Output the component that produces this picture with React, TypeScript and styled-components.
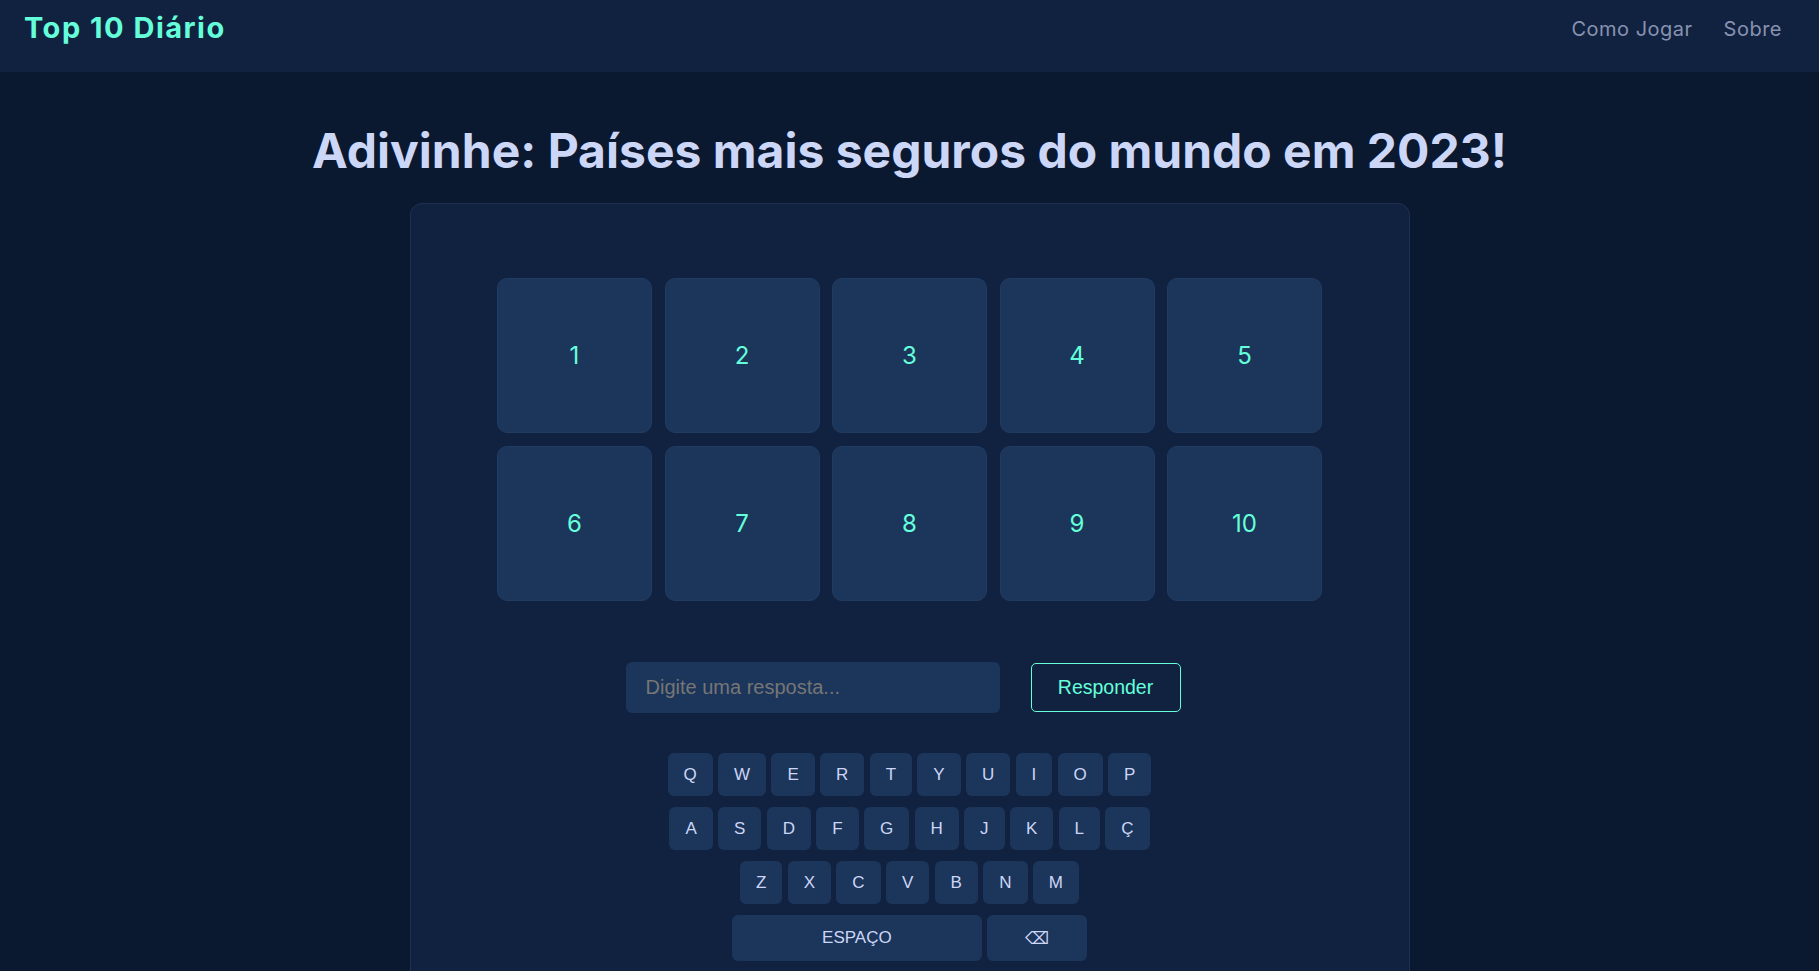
import styled, { createGlobalStyle } from 'styled-components';

const GlobalStyle = createGlobalStyle`
  html, body {
    margin: 0;
    padding: 0;
    background: #0a192f;
  }
  body {
    font-family: Inter, "Noto Sans", sans-serif;
    color: #ccd6f6;
  }
  * {
    box-sizing: border-box;
  }
`;

const Header = styled.header`
  height: 72px;
  background: #112240;
  display: flex;
  align-items: flex-start;
  justify-content: space-between;
  padding: 10px 37px 0 24px;
`;

const Logo = styled.div`
  font-family: Inter, sans-serif;
  font-size: 29px;
  font-weight: 700;
  color: #64ffda;
  line-height: 36px;
  letter-spacing: 1.5px;
`;

const Nav = styled.nav`
  display: flex;
  gap: 31px;
  padding-top: 2px;
`;

const NavLink = styled.a`
  font-family: Inter, sans-serif;
  font-size: 20px;
  color: #8892b0;
  line-height: 34px;
  letter-spacing: 0.5px;
  text-decoration: none;
`;

const Main = styled.main`
  display: flex;
  flex-direction: column;
  align-items: center;
`;

const Title = styled.h1`
  margin: 50px 0 23px;
  font-family: Inter, sans-serif;
  font-size: 48px;
  font-weight: 700;
  line-height: 58px;
  color: #ccd6f6;
  text-align: center;
`;

const Card = styled.section`
  width: 1000px;
  background: #112240;
  border: 1px solid #1f3152;
  border-radius: 12px;
  padding: 74px 0 40px;
  display: flex;
  flex-direction: column;
  align-items: center;
`;

const Board = styled.div`
  display: grid;
  grid-template-columns: repeat(5, 155px);
  grid-auto-rows: 155px;
  gap: 13px 12.5px;
`;

const Tile = styled.div`
  background: #1c355a;
  border: 1px solid #213b62;
  border-radius: 10px;
  display: flex;
  align-items: center;
  justify-content: center;
  font-family: Inter, sans-serif;
  font-size: 24px;
  font-weight: 400;
  color: #64ffda;
`;

const AnswerRow = styled.form`
  display: flex;
  align-items: center;
  gap: 31px;
  margin-top: 61px;
  padding-right: 13px;
`;

const AnswerInput = styled.input`
  width: 374px;
  height: 51px;
  background: #1c355a;
  border: none;
  border-radius: 6px;
  padding: 0 20px;
  font-family: "Liberation Sans", Arial, sans-serif;
  font-size: 20px;
  color: #ccd6f6;
  outline: none;

  &::placeholder {
    color: #767676;
  }
`;

const SubmitButton = styled.button`
  width: 150px;
  height: 49px;
  background: transparent;
  border: 1px solid #64ffda;
  border-radius: 5px;
  font-family: "Liberation Sans", Arial, sans-serif;
  font-size: 19.5px;
  color: #64ffda;
  cursor: pointer;
`;

const Keyboard = styled.div`
  margin-top: 40px;
  display: flex;
  flex-direction: column;
  align-items: center;
  gap: 11px;
`;

const KeyRow = styled.div`
  display: flex;
  gap: 5.3px;
`;

const Key = styled.button<{ $width?: number; $tall?: boolean }>`
  height: ${(p) => (p.$tall ? 46 : 43)}px;
  width: ${(p) => (p.$width ? `${p.$width}px` : 'auto')};
  padding: 0 16px;
  background: #1c355a;
  border: none;
  border-radius: 6px;
  font-family: "Liberation Sans", Arial, sans-serif;
  font-size: 17px;
  color: #ccd6f6;
  display: flex;
  align-items: center;
  justify-content: center;
  cursor: pointer;
`;

const rows = [
  ['Q', 'W', 'E', 'R', 'T', 'Y', 'U', 'I', 'O', 'P'],
  ['A', 'S', 'D', 'F', 'G', 'H', 'J', 'K', 'L', 'Ç'],
  ['Z', 'X', 'C', 'V', 'B', 'N', 'M'],
];

const App = () => (
  <>
    <GlobalStyle />
    <Header>
      <Logo>Top 10 Diário</Logo>
      <Nav>
        <NavLink href="#">Como Jogar</NavLink>
        <NavLink href="#">Sobre</NavLink>
      </Nav>
    </Header>
    <Main>
      <Title>Adivinhe: Países mais seguros do mundo em 2023!</Title>
      <Card>
        <Board>
          {Array.from({ length: 10 }, (_, i) => (
            <Tile key={i}>{i + 1}</Tile>
          ))}
        </Board>
        <AnswerRow onSubmit={(e) => e.preventDefault()}>
          <AnswerInput placeholder="Digite uma resposta..." />
          <SubmitButton type="submit">Responder</SubmitButton>
        </AnswerRow>
        <Keyboard>
          {rows.map((row, r) => (
            <KeyRow key={r}>
              {row.map((k) => (
                <Key key={k}>{k}</Key>
              ))}
            </KeyRow>
          ))}
          <KeyRow>
            <Key $width={250} $tall>ESPAÇO</Key>
            <Key $width={100} $tall>⌫</Key>
          </KeyRow>
        </Keyboard>
      </Card>
    </Main>
  </>
);

export default App;
